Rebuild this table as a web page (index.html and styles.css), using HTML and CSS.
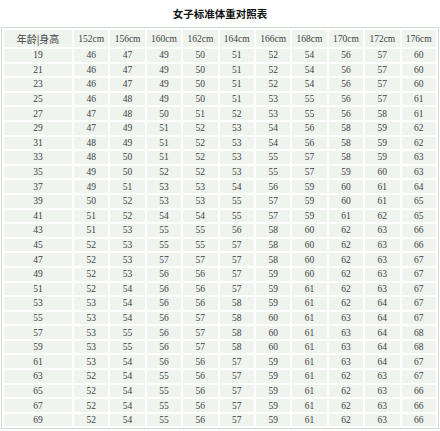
FILE: index.html
```html
<!DOCTYPE html>
<html lang="zh">
<head>
<meta charset="utf-8">
<link rel="stylesheet" href="styles.css">
</head>
<body>
<div class="title">女子标准体重对照表</div>
<table class="chart">
<thead>
<tr><th class="age">年龄|身高</th><th>152cm</th><th>156cm</th><th>160cm</th><th>162cm</th><th>164cm</th><th>166cm</th><th>168cm</th><th>170cm</th><th>172cm</th><th>176cm</th></tr>
</thead>
<tbody id="rows"></tbody>
</table>
<script>
var data = [
[19,46,47,49,50,51,52,54,56,57,60],
[21,46,47,49,50,51,52,54,56,57,60],
[23,46,47,49,50,51,52,54,56,57,60],
[25,46,48,49,50,51,53,55,56,57,61],
[27,47,48,50,51,52,53,55,56,58,61],
[29,47,49,51,52,53,54,56,58,59,62],
[31,48,49,51,52,53,54,56,58,59,62],
[33,48,50,51,52,53,55,57,58,59,63],
[35,49,50,52,52,53,55,57,59,60,63],
[37,49,51,53,53,54,56,59,60,61,64],
[39,50,52,53,53,55,57,59,60,61,65],
[41,51,52,54,54,55,57,59,61,62,65],
[43,51,53,55,55,56,58,60,62,63,66],
[45,52,53,55,55,57,58,60,62,63,66],
[47,52,53,57,57,57,58,60,62,63,67],
[49,52,53,56,56,57,59,60,62,63,67],
[51,52,54,56,56,57,59,61,62,63,67],
[53,53,54,56,56,58,59,61,62,64,67],
[55,53,54,56,57,58,60,61,63,64,67],
[57,53,55,56,57,58,60,61,63,64,68],
[59,53,55,56,57,58,60,61,63,64,68],
[61,53,54,56,56,57,59,61,63,64,67],
[63,52,54,55,56,57,59,61,62,63,67],
[65,52,54,55,56,57,59,61,62,63,66],
[67,52,54,55,56,57,59,61,62,63,66],
[69,52,54,55,56,57,59,61,62,63,66]
];
var tb = document.getElementById('rows');
var html = '';
for (var i = 0; i < data.length; i++) {
  html += '<tr>';
  for (var j = 0; j < data[i].length; j++) html += '<td>' + data[i][j] + '</td>';
  html += '</tr>';
}
tb.innerHTML = html;
</script>
</body>
</html>
```
FILE: styles.css
```css
html, body {
  margin: 0;
  padding: 0;
  background: #ffffff;
}
body {
  width: 440px;
  height: 431px;
  overflow: hidden;
  font-family: "Liberation Serif", "Noto Sans CJK SC", serif;
  color: #3f3f3f;
}
.title {
  height: 27px;
  line-height: 27px;
  text-align: center;
  font-family: "Noto Sans CJK SC", sans-serif;
  font-weight: bold;
  font-size: 10.5px;
  color: #111;
}
.chart {
  margin-left: 1px;
  width: 438px;
  border: 1px solid #d4d8d4;
  border-collapse: separate;
  border-spacing: 2px;
  background: #ffffff;
  table-layout: fixed;
}
.chart th, .chart td {
  background: #eff4ef;
  padding: 0;
  text-align: center;
  font-weight: normal;
  font-size: 9.5px;
}
.chart th {
  height: 17px;
}
.chart th.age {
  width: 68px;
  font-family: "Noto Sans CJK SC", sans-serif;
  font-size: 10px;
}
.chart td {
  height: 12.6px;
  line-height: 12px;
}
```
